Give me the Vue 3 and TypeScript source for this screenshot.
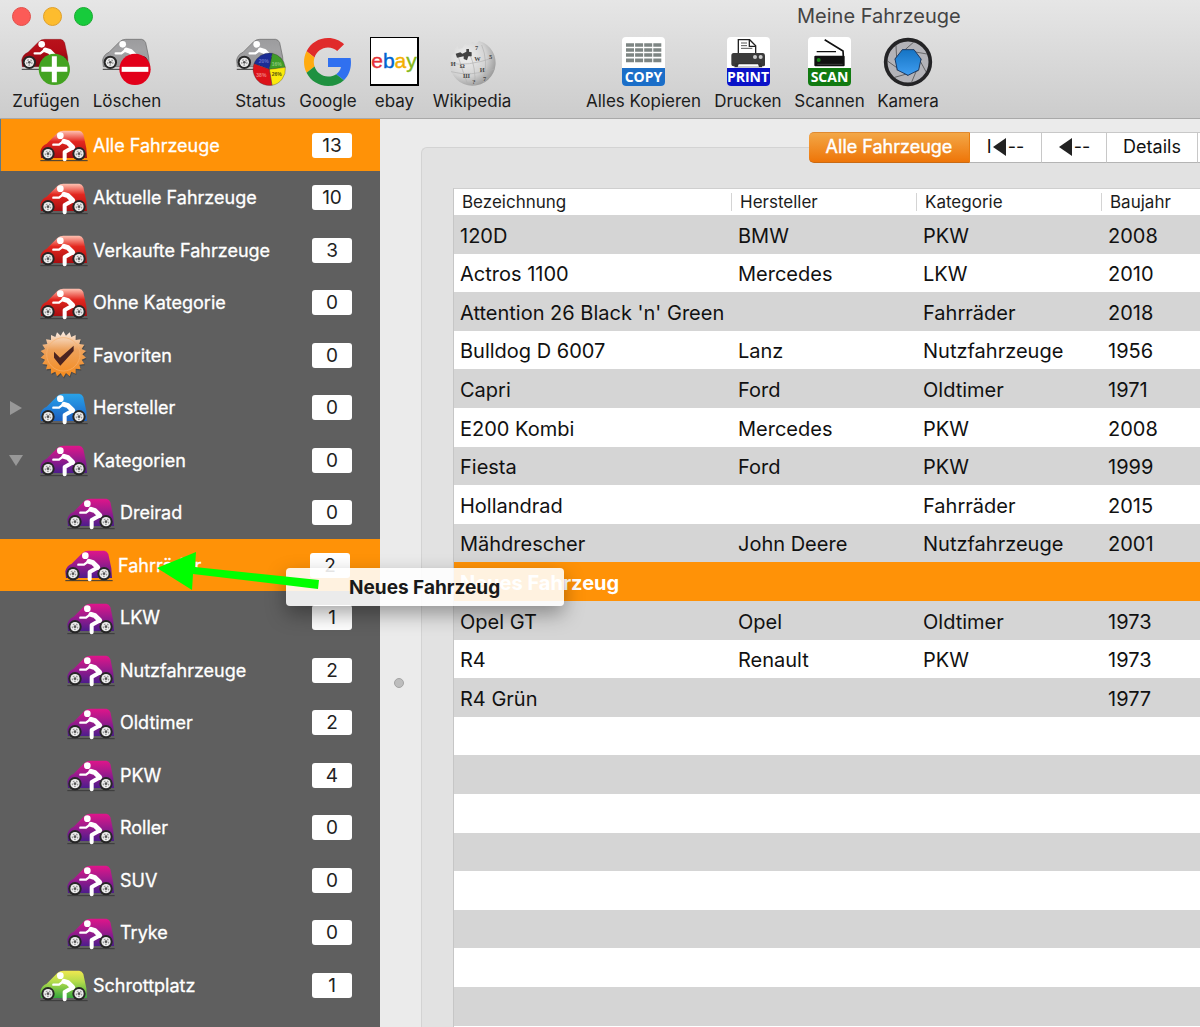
<script setup lang="ts">
import { ref } from 'vue'

type Paint = 'red' | 'blue' | 'purple' | 'green' | 'badge'

interface Entry {
  label: string
  count: number
  paint: Paint
  child?: boolean
  arrow?: 'right' | 'down'
}

interface Vehicle {
  name: string
  maker: string
  category: string
  year: string
}

const paints = [
  { id: 'red', top: '#ffc4b4', mid: '#e3271f', low: '#a80d10' },
  { id: 'blue', top: '#2aa3e8', mid: '#2389dc', low: '#1c5fc0' },
  { id: 'purple', top: '#e0158a', mid: '#a81a8c', low: '#4d1c8c' },
  { id: 'green', top: '#f0e850', mid: '#b5dc4c', low: '#35a83c' },
  { id: 'dark', top: '#b9121b', mid: '#b40d18', low: '#7c0710' },
  { id: 'grey', top: '#9c9c9e', mid: '#a2a2a4', low: '#98989a' },
]

const entries: Entry[] = [
  { label: 'Alle Fahrzeuge', count: 13, paint: 'red' },
  { label: 'Aktuelle Fahrzeuge', count: 10, paint: 'red' },
  { label: 'Verkaufte Fahrzeuge', count: 3, paint: 'red' },
  { label: 'Ohne Kategorie', count: 0, paint: 'red' },
  { label: 'Favoriten', count: 0, paint: 'badge' },
  { label: 'Hersteller', count: 0, paint: 'blue', arrow: 'right' },
  { label: 'Kategorien', count: 0, paint: 'purple', arrow: 'down' },
  { label: 'Dreirad', count: 0, paint: 'purple', child: true },
  { label: 'Fahrräder', count: 2, paint: 'purple', child: true },
  { label: 'LKW', count: 1, paint: 'purple', child: true },
  { label: 'Nutzfahrzeuge', count: 2, paint: 'purple', child: true },
  { label: 'Oldtimer', count: 2, paint: 'purple', child: true },
  { label: 'PKW', count: 4, paint: 'purple', child: true },
  { label: 'Roller', count: 0, paint: 'purple', child: true },
  { label: 'SUV', count: 0, paint: 'purple', child: true },
  { label: 'Tryke', count: 0, paint: 'purple', child: true },
  { label: 'Schrottplatz', count: 1, paint: 'green' },
]

const v = (name: string, maker: string, category: string, year: string): Vehicle => ({ name, maker, category, year })

const vehicles: Vehicle[] = [
  v('120D', 'BMW', 'PKW', '2008'),
  v('Actros 1100', 'Mercedes', 'LKW', '2010'),
  v("Attention 26 Black 'n' Green", '', 'Fahrräder', '2018'),
  v('Bulldog D 6007', 'Lanz', 'Nutzfahrzeuge', '1956'),
  v('Capri', 'Ford', 'Oldtimer', '1971'),
  v('E200 Kombi', 'Mercedes', 'PKW', '2008'),
  v('Fiesta', 'Ford', 'PKW', '1999'),
  v('Hollandrad', '', 'Fahrräder', '2015'),
  v('Mähdrescher', 'John Deere', 'Nutzfahrzeuge', '2001'),
  v('Neues Fahrzeug', '', '', ''),
  v('Opel GT', 'Opel', 'Oldtimer', '1973'),
  v('R4', 'Renault', 'PKW', '1973'),
  v('R4 Grün', '', '', '1977'),
  ...Array.from({ length: 9 }, () => v('', '', '', '')),
]

const selected = ref(0)
const dropTarget = ref(8)
const selectedVehicle = ref(9)

// Serrated outline of the favourites seal
const seal = Array.from({ length: 44 }, (_, i) => {
  const r = i % 2 ? 57 : 69
  const a = (i * Math.PI) / 22
  return `${Math.round(70 + r * Math.sin(a))},${Math.round(70 - r * Math.cos(a))}`
}).join(' ')

// Shutter blades of the camera icon
const blades = Array.from({ length: 7 }, (_, i) => (i * 360) / 7)
</script>

<template>
  <div class="window">
    <svg class="defs" aria-hidden="true">
      <defs>
        <linearGradient v-for="p in paints" :id="p.id" :key="p.id" x1="0" y1="0" x2="0" y2="1">
          <stop offset="0" :stop-color="p.top" />
          <stop offset="0.4" :stop-color="p.mid" />
          <stop offset="1" :stop-color="p.low" />
        </linearGradient>
        <linearGradient id="sealfill" x1="0" y1="0" x2="0" y2="1">
          <stop offset="0" stop-color="#fbeee6" />
          <stop offset="0.4" stop-color="#eda25c" />
          <stop offset="1" stop-color="#f58a1c" />
        </linearGradient>
        <radialGradient id="globe" cx="0.35" cy="0.35" r="0.75">
          <stop offset="0" stop-color="#f2f2f2" />
          <stop offset="0.6" stop-color="#d2d2d2" />
          <stop offset="1" stop-color="#909090" />
        </radialGradient>
        <linearGradient id="lens" x1="0" y1="0" x2="0" y2="1">
          <stop offset="0" stop-color="#1574c4" />
          <stop offset="1" stop-color="#3f9df0" />
        </linearGradient>
        <symbol id="carparts" viewBox="0 0 144 96">
          <path d="M1 92H143" stroke="#3a3a3a" stroke-width="3" />
          <g v-for="x in [24, 117]" :key="x">
            <circle :cx="x" cy="71" r="20" fill="#262626" />
            <circle :cx="x" cy="71" r="14" fill="#ececec" />
            <circle :cx="x" cy="71" r="8" fill="none" stroke="#999" stroke-width="4" stroke-dasharray="5 5" />
            <circle :cx="x" cy="71" r="4" fill="#555" />
          </g>
          <g fill="none" stroke="#fff" stroke-linejoin="round" stroke-linecap="round">
            <path d="M70 34 57 44H40" stroke-width="7" />
            <path d="M72 34 84 38 98 52" stroke-width="15" />
            <path d="M97 53 74 66V88" stroke-width="12" />
          </g>
          <circle cx="61" cy="17" r="10" fill="#fff" />
        </symbol>
      </defs>
    </svg>

    <header class="toolbar">
      <div class="titlebar">
        <div class="lights">
          <button class="light close" aria-label="Schließen"></button>
          <button class="light mini" aria-label="Minimieren"></button>
          <button class="light zoom" aria-label="Zoomen"></button>
        </div>
        <h1>Meine Fahrzeuge</h1>
      </div>

      <div class="tools">
        <button class="tool w-m">
          <svg width="50" height="50" viewBox="0 0 150 150">
            <g transform="translate(1 5)">
              <path d="M3 84 1 64Q4 48 20 41L52 9Q60 2 70 2H118Q126 3 130 12L139 55 141 84Z" fill="url(#dark)" stroke="#6d1016" />
              <use href="#carparts" width="144" height="96" />
            </g>
            <circle cx="100" cy="97" r="47" fill="#43a321" />
            <path d="M100 58V136M61 97H139" stroke="#fff" stroke-width="15" />
          </svg>
          <span>Zufügen</span>
        </button>
        <button class="tool w-m">
          <svg width="50" height="50" viewBox="0 0 150 150">
            <g transform="translate(1 5)">
              <path d="M3 84 1 64Q4 48 20 41L52 9Q60 2 70 2H118Q126 3 130 12L139 55 141 84Z" fill="url(#grey)" stroke="#666" stroke-width="2" />
              <use href="#carparts" width="144" height="96" />
            </g>
            <circle cx="99" cy="97" r="47" fill="#e2001a" />
            <path d="M59 97H139" stroke="#fff" stroke-width="15" />
          </svg>
          <span>Löschen</span>
        </button>

        <button class="tool w-s gap">
          <svg width="50" height="50" viewBox="0 0 150 150">
            <g transform="translate(1 5)">
              <path d="M3 84 1 64Q4 48 20 41L52 9Q60 2 70 2H118Q126 3 130 12L139 55 141 84Z" fill="url(#grey)" stroke="#666" stroke-width="2" />
              <use href="#carparts" width="144" height="96" />
            </g>
            <g stroke="#333" stroke-width="1">
              <path d="M100 97 54 80A49 49 0 0 1 109 49Z" fill="#1b2d94" />
              <path d="M100 97 109 49A49 49 0 0 1 148 91Z" fill="#3f9c28" />
              <path d="M100 97 148 91A49 49 0 0 1 108 145Z" fill="#fbe90c" />
              <path d="M100 97 108 145A49 49 0 0 1 54 80Z" fill="#dc1219" />
            </g>
            <g class="pct">
              <text x="68" y="77" fill="#6672c8">20%</text>
              <text x="107" y="88" fill="#8cc77c">16%</text>
              <text x="61" y="119" fill="#f08080">38%</text>
              <text x="107" y="118" fill="#55500a">26%</text>
            </g>
          </svg>
          <span>Status</span>
        </button>
        <button class="tool w-g">
          <svg width="50" height="50" viewBox="-1 -1 50 50">
            <path fill="#e02b2b" d="M24 9.5c3.54 0 6.71 1.22 9.21 3.6l6.85-6.85C35.9 2.38 30.47 0 24 0 14.62 0 6.51 5.38 2.56 13.22l7.98 6.19C12.43 13.72 17.74 9.5 24 9.5z" />
            <path fill="#3070f0" d="M46.98 24.55c0-1.57-.15-3.09-.38-4.55H24v9.02h12.94c-.58 2.96-2.26 5.48-4.78 7.18l7.73 6c4.51-4.18 7.09-10.36 7.09-17.65z" />
            <path fill="#ffab10" d="M10.53 28.59c-.48-1.45-.76-2.99-.76-4.59s.27-3.14.76-4.59l-7.98-6.19C.92 16.46 0 20.12 0 24c0 3.88.92 7.54 2.56 10.78l7.97-6.19z" />
            <path fill="#1f9140" d="M24 48c6.48 0 11.93-2.13 15.89-5.81l-7.73-6c-2.15 1.45-4.92 2.3-8.16 2.3-6.26 0-11.57-4.22-13.47-9.91l-7.98 6.19C6.51 42.62 14.62 48 24 48z" />
          </svg>
          <span>Google</span>
        </button>
        <button class="tool w-e">
          <div class="ebay"><b class="e">e</b><b class="b">b</b><b class="a">a</b><b class="y">y</b></div>
          <span>ebay</span>
        </button>
        <button class="tool w-w">
          <svg width="50" height="50" viewBox="0 0 150 150">
            <path d="M22 38 32 22 34 36 46 34 54 20 64 24 76 14 86 22 96 12 110 17A69 69 0 1 1 12 54L24 48Z" fill="url(#globe)" />
            <g fill="none" stroke="#b0b0b0" stroke-width="2">
              <path d="M34 60Q46 100 62 142M70 56Q86 90 84 146M104 24Q124 70 110 136M9 78Q60 90 140 62M12 104Q70 120 144 96" />
            </g>
            <path d="M26 50 40 46 46 50 58 44V36H66V44L74 46V58H64L60 70 50 66V58L30 62Z" fill="#444" />
            <g class="glyphs">
              <text x="38" y="92">Ω</text>
              <text x="82" y="72">W</text>
              <text x="98" y="106">И</text>
              <text x="48" y="122">Ш</text>
              <text x="11" y="86">И</text>
              <text x="84" y="38">7</text>
              <text x="76" y="140">?</text>
              <text x="126" y="66">5</text>
              <text x="108" y="132">7</text>
            </g>
          </svg>
          <span>Wikipedia</span>
        </button>

        <button class="tool w-k gap">
          <div class="card copy">
            <svg width="43" height="31" viewBox="0 0 129 93">
              <path d="M12 24H118M12 39H118M12 54H118M12 70H118" stroke="#7d8583" stroke-width="11" stroke-dasharray="24 3.3" />
            </svg>
            <em>COPY</em>
          </div>
          <span>Alles Kopieren</span>
        </button>
        <button class="tool w-m">
          <div class="card print">
            <svg width="43" height="31" viewBox="0 0 129 93">
              <path d="M34 50V8H68L86 26V50" fill="#fff" stroke="#222" stroke-width="4" />
              <path d="M67 8V28H87" fill="none" stroke="#222" stroke-width="4" />
              <path d="M42 18H60M42 26H60M42 34H76" stroke="#555" stroke-width="3" />
              <path d="M20 48H108Q114 48 114 56V84Q114 88 108 88H96V80H32V88H20Q13 88 13 82V56Q13 48 20 48Z" fill="#3b3b3b" />
              <path d="M26 78H102L106 91H22Z" fill="#333" />
              <path d="M35 82H93L96 89H32Z" fill="#fff" />
              <circle cx="84" cy="60" r="6" fill="#ccc" /><circle cx="101" cy="60" r="6" fill="#ccc" />
            </svg>
            <em>PRINT</em>
          </div>
          <span>Drucken</span>
        </button>
        <button class="tool w-c">
          <div class="card scan">
            <svg width="43" height="31" viewBox="0 0 129 93">
              <path d="M50 8 105 42 106 58" fill="none" stroke="#111" stroke-width="5" />
              <path d="M26 44H84" stroke="#111" stroke-width="4" />
              <rect x="19" y="56" width="91" height="32" rx="3" fill="#111" />
              <path d="M28 82H104" stroke="#555" stroke-width="2" />
              <circle cx="32" cy="69" r="6" fill="#188a18" />
            </svg>
            <em>SCAN</em>
          </div>
          <span>Scannen</span>
        </button>
        <button class="tool w-a">
          <svg width="50" height="50" viewBox="-75 -75 150 150">
            <circle r="67" fill="#b3b3b8" stroke="#242426" stroke-width="11" />
            <path v-for="b in blades" :key="b" :transform="`rotate(${b})`" d="M-18 -37 L57 -24" stroke="#444" stroke-width="2" />
            <polygon points="-17,-37 18,-37 39,-9 32,24 0,40 -32,24 -39,-9" fill="url(#lens)" stroke="#1d3c66" stroke-width="3" />
          </svg>
          <span>Kamera</span>
        </button>
      </div>
    </header>

    <div class="body">
      <nav class="sidebar">
        <a
          v-for="(e, i) in entries"
          :key="e.label"
          href="#"
          class="entry"
          :class="{ child: e.child, active: i === selected, drop: i === dropTarget }"
          @click.prevent="selected = i"
        >
          <span class="twist">
            <svg v-if="e.arrow" width="14" height="14" viewBox="0 0 14 14">
              <path :d="e.arrow === 'right' ? 'M1 0 13 7 1 14Z' : 'M0 2H14L7 13Z'" fill="#989898" />
            </svg>
          </span>
          <svg v-if="e.paint === 'badge'" class="icon" width="48" height="48" viewBox="0 0 144 144">
            <polygon :points="seal" fill="#4a4a4a" transform="translate(2 4)" />
            <polygon :points="seal" fill="url(#sealfill)" />
            <circle cx="70" cy="70" r="50" fill="none" stroke="#f7b06c" stroke-width="2" />
            <path d="M42 62 60 80 101 44V60L61 104 42 80Z" fill="#4b2420" />
          </svg>
          <svg v-else class="icon" width="48" height="34" viewBox="0 -6 144 102">
            <path d="M3 84 1 64Q4 48 20 41L52 9Q60 2 70 2H118Q126 3 130 12L139 55 141 84Z" :fill="`url(#${e.paint})`" />
            <use href="#carparts" width="144" height="96" />
          </svg>
          <span class="name">{{ e.label }}</span>
          <span class="count">{{ e.count }}</span>
        </a>
      </nav>

      <div class="splitter"><i></i></div>

      <main class="panel">
        <div class="segments">
          <button class="seg on">Alle Fahrzeuge</button>
          <button class="seg first">I<svg width="13" height="18" viewBox="0 0 13 18"><path d="M13 0V18L0 9Z" fill="#222" /></svg>--</button>
          <button class="seg prev"><svg width="13" height="18" viewBox="0 0 13 18"><path d="M13 0V18L0 9Z" fill="#222" /></svg>--</button>
          <button class="seg details">Details</button>
          <button class="seg rest" aria-label="Weitere"></button>
        </div>

        <div class="list">
          <table>
            <colgroup>
              <col class="c-name" /><col class="c-mid" /><col class="c-mid" /><col />
            </colgroup>
            <thead>
              <tr>
                <th><span>Bezeichnung</span></th>
                <th><span>Hersteller</span></th>
                <th><span>Kategorie</span></th>
                <th><span>Baujahr</span></th>
              </tr>
            </thead>
            <tbody>
              <tr v-for="(r, i) in vehicles" :key="i" :class="{ sel: i === selectedVehicle }">
                <td>{{ r.name }}</td>
                <td>{{ r.maker }}</td>
                <td>{{ r.category }}</td>
                <td>{{ r.year }}</td>
              </tr>
            </tbody>
          </table>
        </div>
      </main>
    </div>

    <div class="ghost">Neues Fahrzeug</div>
    <svg class="pointer" width="164" height="40" viewBox="0 0 164 40" aria-hidden="true">
      <path d="M1 17 40 1 39 16 163 29 162 38 37 23 36 39Z" fill="#0f0" />
    </svg>
  </div>
</template>

<style>
body {
  margin: 0;
  background: #ebebeb;
}
</style>

<style scoped>
.window {
  position: relative;
  display: flex;
  flex-direction: column;
  height: 100vh;
  overflow: hidden;
  background: #ebebeb;
  color: #1c1c1c;
  font-family: Inter, "Liberation Sans", sans-serif;
  font-size: 18px;
}
button {
  margin: 0;
  padding: 0;
  border: 0;
  background: none;
  color: inherit;
  font: inherit;
}
.defs {
  position: absolute;
  width: 0;
  height: 0;
}
.toolbar {
  flex: none;
  height: 118px;
  border-bottom: 1px solid #a9a9a9;
  background: linear-gradient(#e6e6e6, #cccccc);
}
.titlebar {
  display: flex;
  align-items: center;
  height: 32px;
}
.lights {
  display: flex;
  gap: 12px;
  width: 785px;
  padding-left: 12px;
}
.light {
  width: 19px;
  height: 19px;
  border-radius: 50%;
}
.close { background: #fc5b57; border: 1px solid #e2504b; }
.mini { background: #fdbc2e; border: 1px solid #e0a02a; }
.zoom { background: #17cb3c; border: 1px solid #1aab31; }
h1 {
  margin: 0;
  color: #444;
  font-size: 20px;
  font-weight: 400;
  line-height: 32px;
  white-space: nowrap;
}
.tools {
  display: flex;
  gap: 13px;
  padding: 5px 0 0 12px;
}
.tool {
  display: flex;
  flex: none;
  flex-direction: column;
  align-items: center;
  font-size: 17px;
  line-height: 26px;
  white-space: nowrap;
}
.tool > svg { margin-bottom: 1px; }
.w-m { width: 68px; }
.w-s { width: 51px; }
.w-g { width: 58px; }
.w-e { width: 49px; }
.w-w { width: 80px; }
.w-k { width: 115px; }
.w-c { width: 69px; }
.w-a { width: 62px; }
.gap { margin-left: 61px; }
.pct {
  font: 700 15px "Liberation Sans", sans-serif;
}
.glyphs {
  fill: #444;
  font: 700 19px "Liberation Serif", serif;
}
.ebay {
  box-sizing: border-box;
  width: 49px;
  height: 49px;
  margin-bottom: 2px;
  border: 1px solid #000;
  border-right-width: 2px;
  border-bottom-width: 2px;
  background: #fff;
  font: 21px/46px "Liberation Sans", sans-serif;
}
.ebay b {
  font-weight: 400;
  -webkit-text-stroke: 0.4px currentColor;
}
.e { color: #e53238; }
.b { color: #0064d2; }
.a { color: #f5af02; }
.y { color: #86b817; }
.card {
  width: 43px;
  height: 49px;
  margin-bottom: 2px;
  overflow: hidden;
  border-radius: 4px;
  background: #fff;
}
.card svg { display: block; }
.card em {
  display: block;
  height: 18px;
  color: #fff;
  font: 700 14px/18px "Open Sans", sans-serif;
}
.copy em { background: #1b6ec8; }
.print em { background: #0a12c8; }
.scan em { background: #117a11; }

.body {
  display: flex;
  flex: 1;
  min-height: 0;
}
.sidebar {
  flex: none;
  width: 380px;
  overflow: hidden;
  background: #5f5f5f;
}
.entry {
  display: flex;
  box-sizing: border-box;
  align-items: center;
  height: 52px;
  padding: 0 28px 0 9px;
  color: #fff;
  text-decoration: none;
}
.entry:nth-child(even) { height: 53px; }
.twist {
  display: flex;
  width: 14px;
  margin-right: 17px;
}
.child .twist { margin-right: 44px; }
.icon {
  flex: none;
  margin-right: 5px;
}
.name {
  flex: 1;
  white-space: nowrap;
  -webkit-text-stroke: 0.3px #fff;
}
.count {
  width: 40px;
  border-radius: 3px;
  background: #fff;
  color: #222;
  font-size: 19px;
  line-height: 25px;
  text-align: center;
}
.active,
.drop { background: #ff9207; }
.active { box-shadow: inset 1px 0 #5c7a8a; }
.drop { padding: 0 30px 0 7px; }

.splitter {
  display: flex;
  flex: none;
  align-items: center;
  justify-content: center;
  width: 41px;
  padding-top: 220px;
  box-sizing: border-box;
}
.splitter i {
  width: 8px;
  height: 8px;
  margin-right: 4px;
  border: 1px solid #a4a4a4;
  border-radius: 50%;
  background: #bdbdbd;
}
.panel {
  flex: 1;
  min-width: 0;
  margin-top: 28px;
  border: 1px solid #d3d3d3;
  border-width: 1px 0 0 1px;
  border-radius: 6px 0 0 0;
  background: #e2e2e2;
}
.segments {
  display: flex;
  justify-content: flex-end;
  margin-top: -16px;
}
.seg {
  box-sizing: border-box;
  height: 31px;
  padding-bottom: 2px;
  border: 1px solid #c8c8c8;
  border-width: 1px 1px 1px 0;
  border-bottom-color: #b4b4b4;
  background: #fff;
  color: #111;
  line-height: 27px;
  white-space: nowrap;
}
.seg svg {
  margin: 0 2px 0 1px;
  vertical-align: -3px;
}
.on {
  width: 161px;
  border-color: #e08a30 #e87d10 #c96a14;
  border-radius: 5px 0 0 5px;
  background: linear-gradient(#f3a747, #ee7508);
  color: #fff;
  -webkit-text-stroke: 0.4px #fff;
}
.first { width: 72px; }
.prev { width: 65px; }
.details { width: 91px; }
.rest { width: 2px; border-right: 0; }

.list {
  margin: 25px 0 0 31px;
  border-top: 1px solid #cfcfcf;
  border-left: 1px solid #c6c6c6;
}
table {
  width: 100%;
  border-collapse: collapse;
  table-layout: fixed;
  background: #fff;
}
.c-name { width: 278px; }
.c-mid { width: 185px; }
th {
  box-sizing: border-box;
  height: 26px;
  padding: 0;
  font-size: 17px;
  font-weight: 400;
  line-height: 18px;
  text-align: left;
}
th span {
  display: block;
  padding-left: 8px;
}
th + th span {
  margin-left: -1px;
  border-left: 1px solid #d4d4d4;
}
td {
  box-sizing: border-box;
  height: 39px;
  padding: 2px 0 0 6px;
  color: #111;
  font-size: 20px;
  line-height: 26px;
  white-space: nowrap;
}
tr:nth-child(5n + 2) td,
tr:nth-child(5n + 4) td { height: 38px; }
tbody tr:nth-child(odd) { background: #d5d5d5; }
tbody .sel { background: #ff9207; }
.sel td {
  color: #fff;
  font-weight: 700;
}

.ghost {
  position: absolute;
  top: 568px;
  left: 286px;
  box-sizing: border-box;
  width: 278px;
  padding: 2px 0 0 63px;
  border-radius: 4px;
  background: rgba(255, 255, 255, 0.88);
  box-shadow: 0 8px 20px rgba(0, 0, 0, 0.35);
  color: #1a1a1a;
  font-size: 19px;
  font-weight: 700;
  line-height: 36px;
  white-space: nowrap;
}
.pointer {
  position: absolute;
  top: 551px;
  left: 156px;
}
</style>
